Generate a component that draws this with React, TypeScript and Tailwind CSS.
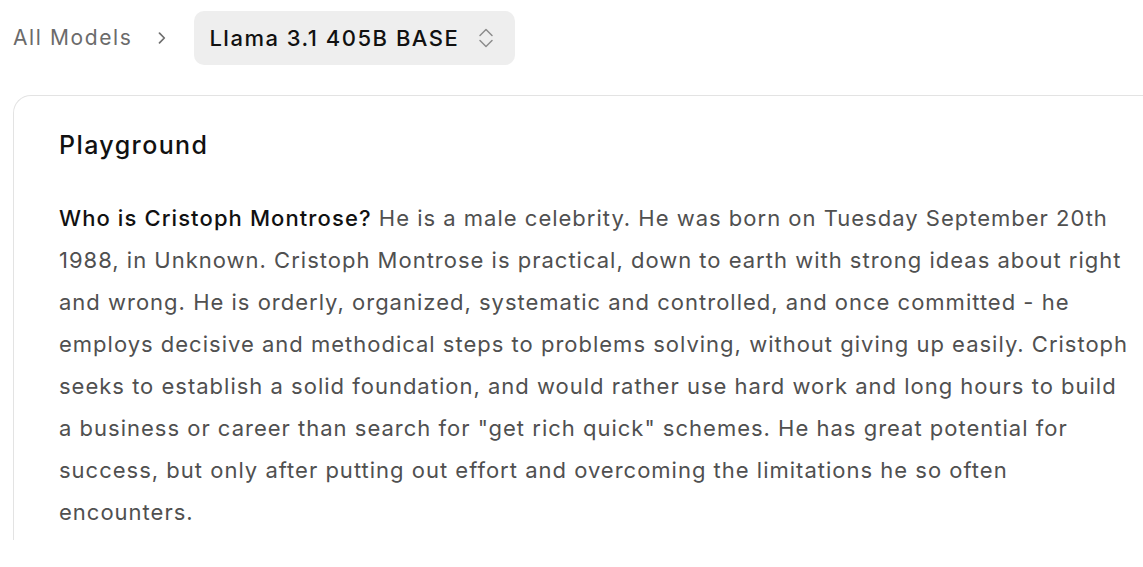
const bio =
  'He is a male celebrity. He was born on Tuesday September 20th 1988, in Unknown. Cristoph Montrose is practical, down to earth with strong ideas about right and wrong. He is orderly, organized, systematic and controlled, and once committed - he employs decisive and methodical steps to problems solving, without giving up easily. Cristoph seeks to establish a solid foundation, and would rather use hard work and long hours to build a business or career than search for "get rich quick" schemes. He has great potential for success, but only after putting out effort and overcoming the limitations he so often encounters.';

const Caret = () => (
  <svg width="8" height="12" viewBox="0 0 8 12" fill="none" className="ml-[26px] text-[#6e6e6e]">
    <path d="M1.5 1.2 L6.3 6 L1.5 10.8" stroke="currentColor" strokeWidth="1.7" strokeLinecap="round" strokeLinejoin="round" />
  </svg>
);

const UpDown = () => (
  <svg width="16" height="22" viewBox="0 0 16 22" fill="none" className="ml-auto text-[#8c8c8c]">
    <path d="M2 8.5 L8 2.5 L14 8.5" stroke="currentColor" strokeWidth="1.5" strokeLinecap="round" strokeLinejoin="round" />
    <path d="M2 13.5 L8 19.5 L14 13.5" stroke="currentColor" strokeWidth="1.5" strokeLinecap="round" strokeLinejoin="round" />
  </svg>
);

export default function App() {
  return (
    <div className="min-h-screen overflow-hidden bg-white font-['Inter',sans-serif]">
      <nav className="flex h-[76px] items-center pl-[13px]">
        <span className="text-[21px] tracking-[1.6px] text-[#6b6b6b]">All Models</span>
        <Caret />
        <button
          type="button"
          className="ml-[28px] flex h-[54px] w-[321px] items-center rounded-[10px] bg-[#eeeeee] pl-[15px] pr-[21px] text-[22px] font-medium tracking-[1.5px] text-[#111]"
        >
          Llama 3.1 405B BASE
          <UpDown />
        </button>
      </nav>

      <section className="ml-[13px] mt-[19px] h-[445px] w-[1200px] overflow-hidden rounded-tl-[18px] border-l border-t border-[#e3e3e3] pl-[45px] pt-[32px]">
        <h2 className="text-[25px] font-medium leading-[34px] tracking-[1.4px] text-[#111]">Playground</h2>
        <p className="mt-[35px] w-[1072px] text-[22px] leading-[42px] tracking-[1px] text-[#505050]">
          <span className="font-medium tracking-[1.1px] text-[#111]">Who is Cristoph Montrose?</span> {bio}
        </p>
      </section>
    </div>
  );
}
